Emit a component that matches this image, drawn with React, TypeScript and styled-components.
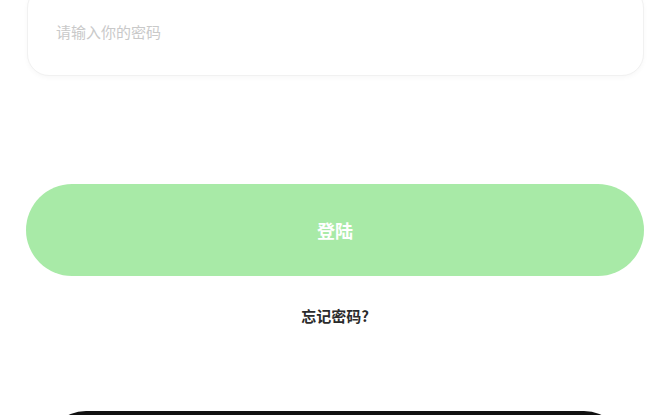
import React from "react";
import styled, {createGlobalStyle} from "styled-components";

const GlobalStyle = createGlobalStyle`
  html, body {
    margin: 0;
    padding: 0;
    background: #ffffff;
    overflow: hidden;
  }
  body {
    font-family: "Noto Sans CJK SC", "Noto Sans", sans-serif;
  }
`;

const Page = styled.main`
  width: 670px;
  height: 415px;
  box-sizing: border-box;
  padding: 0 26px;
  display: flex;
  flex-direction: column;
  overflow: hidden;

  & > * {
    flex-shrink: 0;
  }
`;

const InputCard = styled.label`
  margin-top: -14px;
  margin-left: 1px;
  height: 90px;
  box-sizing: border-box;
  border: 1px solid #f1f1f1;
  border-radius: 22px;
  background: #ffffff;
  box-shadow: 0 2px 5px rgba(0, 0, 0, 0.03);
  display: flex;
  align-items: center;
  padding: 0 28px;
`;

const PasswordInput = styled.input`
  flex: 1;
  border: none;
  outline: none;
  background: transparent;
  font-family: inherit;
  font-size: 15px;
  color: #333;
  padding: 0;

  &::placeholder {
    color: #c9c9c9;
  }
`;

const LoginButton = styled.button`
  margin-top: 108px;
  height: 92px;
  border: none;
  border-radius: 46px;
  background: #a8eaa7;
  color: #ffffff;
  font-family: inherit;
  font-size: 18px;
  font-weight: 700;
  cursor: pointer;
`;

const ForgotLink = styled.a`
  margin-top: 30px;
  align-self: center;
  line-height: 20px;
  font-size: 15px;
  font-weight: 700;
  color: #2b2b2b;
  text-decoration: none;
  cursor: pointer;
`;

const DarkButton = styled.button`
  margin: 85px 20px 0;
  height: 92px;
  border: none;
  border-radius: 40px;
  background: #111111;
`;

const App: React.FC = () => {
  return (
    <>
      <GlobalStyle />
      <Page>
        <InputCard>
          <PasswordInput type="password" placeholder="请输入你的密码" />
        </InputCard>
        <LoginButton>登陆</LoginButton>
        <ForgotLink>忘记密码?</ForgotLink>
        <DarkButton aria-label="other login" />
      </Page>
    </>
  );
};

export default App;
